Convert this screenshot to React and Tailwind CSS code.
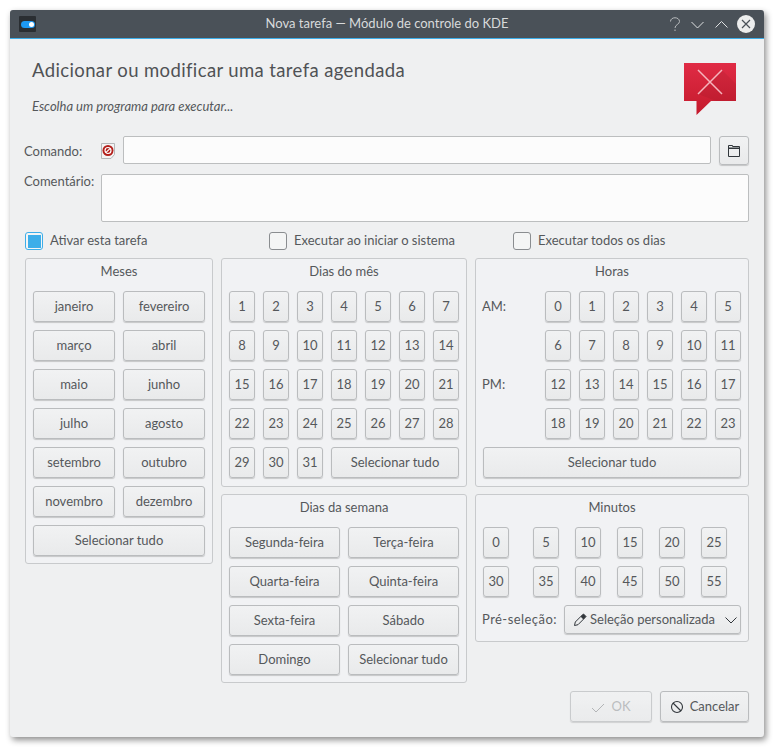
import React from "react";

const font = { fontFamily: 'Lato, "Noto Sans", sans-serif' };
const txt = "text-[#55585b] text-[13px]";

function Btn({ children, className = "", disabled, h = "h-[31px]" }) {
  return (
    <button
      className={
        h + " flex items-center justify-center rounded-[3px] border border-[#babcbe] bg-gradient-to-b from-[#f1f2f3] to-[#e9eaeb] shadow-[0_1px_1px_rgba(0,0,0,0.18)] text-[13px] " +
        (disabled ? "text-[#a5a8ab] opacity-70 " : "text-[#55585b] ") +
        className
      }
    >
      {children}
    </button>
  );
}

function Group({ title, children, pb = "pb-[7px]" }) {
  return (
    <section className={"rounded-[3px] border border-[#c8cacc] bg-[#f1f2f4] px-[7px] pt-[3px] " + pb}>
      <div className={"h-[29px] text-center leading-[18px] " + txt}>{title}</div>
      {children}
    </section>
  );
}

function Check({ checked, label, className = "" }) {
  return (
    <div className={"flex items-center gap-[7px] " + className}>
      <span
        className={
          "flex h-[18px] w-[18px] items-center justify-center rounded-[3px] border bg-[#f4f5f5] " +
          (checked ? "border-[#3daee9]" : "border-[#8a8d90]")
        }
      >
        {checked && <span className="h-[13px] w-[13px] bg-[#3daee9]" />}
      </span>
      <span className={txt}>{label}</span>
    </div>
  );
}

const months = ["janeiro", "fevereiro", "março", "abril", "maio", "junho", "julho", "agosto", "setembro", "outubro", "novembro", "dezembro"];
const weekdays = ["Segunda-feira", "Terça-feira", "Quarta-feira", "Quinta-feira", "Sexta-feira", "Sábado", "Domingo", "Selecionar tudo"];

function HourRow({ label, from }) {
  return (
    <div className="flex items-center">
      <span className={"-ml-[1px] w-[63px] " + txt}>{label}</span>
      <div className="flex gap-[8px]">
        {Array.from({ length: 6 }, (_, i) => (
          <Btn key={i} className="w-[26px]">{from + i}</Btn>
        ))}
      </div>
    </div>
  );
}

function MinuteRow({ values }) {
  return (
    <div className="flex">
      <Btn className="w-[26px]">{values[0]}</Btn>
      <div className="ml-[24px] flex gap-[16px]">
        {values.slice(1).map((v) => (
          <Btn key={v} className="w-[26px]">{v}</Btn>
        ))}
      </div>
    </div>
  );
}

export default function App() {
  return (
    <div className="h-[753px] w-[780px] overflow-hidden bg-white pl-[10px] pt-[10px]" style={font}>
      <div className="flex h-[727px] w-[754px] flex-col rounded-[3px] bg-[#eff0f1] shadow-[2px_3px_6px_rgba(0,0,0,0.45)]">
        <header className="flex h-[29px] shrink-0 items-center rounded-t-[3px] border-b border-[#3daee9] bg-[#4a5158] pl-[9px] pr-[9px]">
          <div className="flex flex-1 items-center">
            <span className="flex h-[16px] w-[17px] items-center justify-center rounded-[1px] bg-[#2a2e32]">
              <span className="flex h-[7px] w-[14px] items-center justify-end rounded-full bg-[#1d99f3] pr-[1px]">
                <span className="h-[5px] w-[5px] rounded-full bg-white" />
              </span>
            </span>
          </div>
          <div className="text-center text-[13px] text-[#d8dadb]">Nova tarefa — Módulo de controle do KDE</div>
          <div className="flex flex-1 items-center justify-end gap-[9px]">
            <svg width="12" height="15" viewBox="0 0 12 15" fill="none" stroke="#b9bcbe" strokeWidth="1"><path d="M1.500 4.500c0-5 9-5 9 0 0 3-4.500 3-4.500 6.500" /><path d="M6 12.500v1.500" /></svg>
            <svg width="15" height="15" viewBox="0 0 15 15" fill="none" stroke="#dfe1e2" strokeWidth="1"><path d="M1.500 5l6 6 6-6" /></svg>
            <svg width="15" height="15" viewBox="0 0 15 15" fill="none" stroke="#dfe1e2" strokeWidth="1"><path d="M1.500 10.500l6-6 6 6" /></svg>
            <svg width="18" height="18" viewBox="0 0 18 18" className="-ml-[1px]"><circle cx="9" cy="9" r="9" fill="#eceded" /><path d="M5 5l8 8M13 5l-8 8" stroke="#4a5158" strokeWidth="1.200" /></svg>
          </div>
        </header>

        <div className="flex flex-1 flex-col px-[15px]">
          <div className="flex h-[97px] shrink-0 items-start justify-between pl-[7px] pr-[13px]">
            <div>
              <h1 className="mt-[19px] text-[18.5px] font-normal leading-[24px] tracking-[0.38px] text-[#4f5255]">Adicionar ou modificar uma tarefa agendada</h1>
              <p className="mt-[15px] text-[13px] italic leading-[18px] text-[#55585b]">Escolha um programa para executar...</p>
            </div>
            <svg width="52" height="52" viewBox="0 0 52 52" className="mt-[24px]">
              <defs>
                <linearGradient id="r" x1="0" y1="0" x2="0" y2="1">
                  <stop offset="0" stopColor="#e02b45" />
                  <stop offset="1" stopColor="#c41a2c" />
                </linearGradient>
              </defs>
              <path d="M0 0h52v38H27L12.500 52V38H0z" fill="url(#r)" />
              <path d="M38 7L52 21v17H32L14 31z" fill="#000" fillOpacity="0.05" />
              <path d="M14 7l24 24M38 7L14 31" stroke="#f5b5be" strokeWidth="1.500" />
            </svg>
          </div>

          <div className="flex h-[29px] items-start">
            <span className={"-ml-[1px] flex h-[31px] w-[77px] shrink-0 items-center " + txt}>Comando:</span>
            <svg width="14" height="16" viewBox="0 0 14 16" className="mt-[7px] shrink-0">
              <path d="M.500.500h13v11l-3.500 4h-9.500z" fill="#f4f4f4" stroke="#b5b7b9" />
              <circle cx="7" cy="7.500" r="5.500" fill="#b3201c" />
              <circle cx="7" cy="7.500" r="3" fill="none" stroke="#fff" strokeWidth="1.200" />
              <path d="M9.200 5.300l-4.400 4.400" stroke="#fff" strokeWidth="1.200" />
            </svg>
            <div className="ml-[8px] h-[28px] w-[588px] rounded-[2px] border border-[#bcbebf] bg-[#fcfcfc]" />
            <Btn h="h-[29px]" className="ml-[8px] w-[30px]">
              <svg width="14" height="14" viewBox="0 0 14 14" fill="none"><path d="M1.500 1.500h4v1h7v10h-11z" stroke="#31363b" /><path d="M2 3.500h10.500V5H2z" fill="#31363b" /></svg>
            </Btn>
          </div>

          <div className="mt-[9px] flex h-[49px] items-start">
            <span className={"-ml-[1px] w-[77px] shrink-0 leading-[15px] " + txt}>Comentário:</span>
            <div className="h-[48px] flex-1 rounded-[2px] border border-[#bcbebf] bg-[#fcfcfc]" />
          </div>

          <div className="mt-[9px] flex h-[18px] items-center">
            <Check checked label="Ativar esta tarefa" className="w-[244px]" />
            <Check label="Executar ao iniciar o sistema" className="w-[244px]" />
            <Check label="Executar todos os dias" />
          </div>

          <div className="mt-[8px] grid grid-cols-[188px_246px_274px] items-start gap-x-[8px]">
            <Group title="Meses">
              <div className="grid grid-cols-2 gap-[8px]">
                {months.map((m) => <Btn key={m}>{m}</Btn>)}
                <Btn className="col-span-2">Selecionar tudo</Btn>
              </div>
            </Group>

            <div className="flex flex-col gap-[7px]">
              <Group title="Dias do mês" pb="pb-[8px]">
                <div className="grid grid-cols-[repeat(7,26px)] gap-[8px]">
                  {Array.from({ length: 31 }, (_, i) => <Btn key={i}>{i + 1}</Btn>)}
                  <Btn className="col-span-4">Selecionar tudo</Btn>
                </div>
              </Group>
              <Group title="Dias da semana">
                <div className="grid grid-cols-2 gap-[8px]">
                  {weekdays.map((d) => <Btn key={d}>{d}</Btn>)}
                </div>
              </Group>
            </div>

            <div className="flex flex-col gap-[7px]">
              <Group title="Horas" pb="pb-[8px]">
                <div className="flex flex-col gap-[8px]">
                  <HourRow label="AM:" from={0} />
                  <HourRow label="" from={6} />
                  <HourRow label="PM:" from={12} />
                  <HourRow label="" from={18} />
                  <Btn>Selecionar tudo</Btn>
                </div>
              </Group>
              <Group title="Minutos">
                <div className="flex flex-col gap-[8px]">
                  <MinuteRow values={[0, 5, 10, 15, 20, 25]} />
                  <MinuteRow values={[30, 35, 40, 45, 50, 55]} />
                  <div className="flex items-center">
                    <span className={"-ml-[1px] w-[82px] whitespace-nowrap tracking-[0.45px] " + txt}>Pré-seleção:</span>
                    <Btn h="h-[29px]" className="flex-1 whitespace-nowrap">
                      <span className="flex w-full items-center justify-between pl-[8px] pr-[3px]">
                        <span className="flex items-center gap-[3px]">
                          <svg width="14" height="14" viewBox="0 0 14 14" fill="none" stroke="#31363b"><path d="M1.500 12.500l.8-3.500 5.700-5.700 2.700 2.700-5.700 5.700z" /><path d="M8 3.300l2.500-2.300 2.500 2.500-2.300 2.500z" fill="#31363b" /></svg>
                          Seleção personalizada
                        </span>
                        <svg width="12" height="10" viewBox="0 0 12 10" fill="none" stroke="#31363b"><path d="M.500 2.500l5.500 5.500 5.500-5.500" /></svg>
                      </span>
                    </Btn>
                  </div>
                </div>
              </Group>
            </div>
          </div>

          <div className="mt-[8px] flex justify-end gap-[8px]">
            <Btn disabled className="w-[82px] gap-[6px]">
              <svg width="14" height="14" viewBox="0 0 14 14" fill="none" stroke="#9a9d9f"><path d="M1 8l4 4 8-8" /></svg>
              OK
            </Btn>
            <Btn className="w-[89px] gap-[6px]">
              <svg width="14" height="14" viewBox="0 0 14 14" fill="none" stroke="#31363b" strokeWidth="1.100"><circle cx="7" cy="7" r="5.500" /><path d="M3 3l8 8" /></svg>
              Cancelar
            </Btn>
          </div>
        </div>
      </div>
    </div>
  );
}
